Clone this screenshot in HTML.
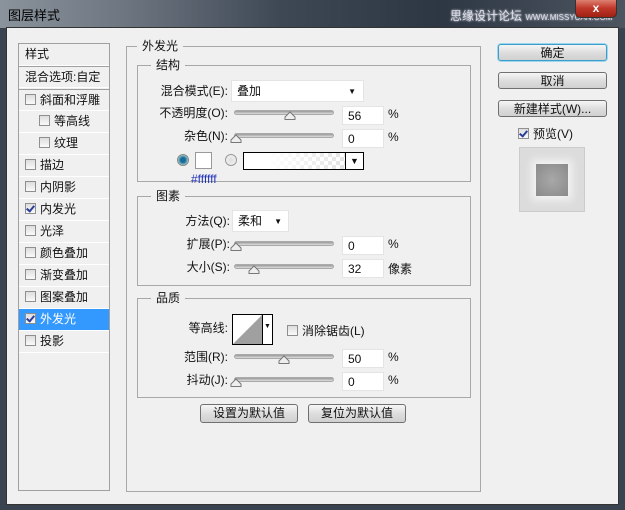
<!DOCTYPE html>
<html><head><meta charset="utf-8"><style>
*{box-sizing:border-box;margin:0;padding:0}
body{width:625px;height:510px;overflow:hidden;background:#3a4350;font-family:"Liberation Sans","Noto Sans CJK SC",sans-serif;font-size:12px;color:#111;position:relative}
.a{position:absolute}
.title{left:0;top:0;width:625px;height:28px;background:linear-gradient(90deg,#8a939c 0%,#6d7680 20%,#3e4855 45%,#2d3743 70%,#4c5560 100%)}
.body{left:6px;top:27px;width:613px;height:478px;background:#f0f0f0;border:1px solid #333}
.list{left:18px;top:43px;width:92px;height:448px;border:1px solid #a0a0a0;background:#f0f0f0}
.row{position:absolute;left:0;width:90px;height:22px;border-bottom:1px solid #fff;line-height:21px;padding-left:6px}
.cb{display:inline-block;width:11px;height:11px;border:1px solid #8f8f8f;background:linear-gradient(#ddd,#fafafa);vertical-align:-1px;margin-right:4px;position:relative}
.cb.on::after{content:"";position:absolute;left:2px;top:0px;width:3px;height:6px;border:solid #2a3e9a;border-width:0 2px 2px 0;transform:rotate(40deg)}
.grp{border:1px solid #a8a8a8}
.leg{position:absolute;background:#f0f0f0;padding:0 5px;top:-9px;line-height:16px}
.lbl{position:absolute;text-align:right;line-height:16px}
.in{position:absolute;background:#fff;border:1px solid #e4e4e4;height:19px;line-height:18px;padding-left:5px}
.trk{position:absolute;height:5px;border-radius:3px;background:linear-gradient(#999,#ddd);border:1px solid #aaa}
.btn{position:absolute;border:1px solid #707070;border-radius:3px;background:linear-gradient(#f6f6f6,#dedede 50%,#d0d0d0);text-align:center;line-height:16px}
</style></head><body>
<div class="a title"></div>
<div class="a" style="left:8px;top:5px;color:#000;font-size:13px">图层样式</div>
<div class="a" style="left:450px;top:7px;color:#dde;font-size:12px;text-shadow:0 0 2px #fff">思缘设计论坛 <span style="font-size:8px">WWW.MISSYUAN.COM</span></div>
<div class="a" style="left:575px;top:-2px;width:42px;height:20px;border-radius:0 0 5px 5px;background:linear-gradient(#e08a7a,#c0392b 50%,#a02010);border:1px solid #333;color:#fff;text-align:center;font-weight:bold;line-height:18px">x</div>
<div class="a body"></div>

<div class="a list">
 <div class="row" style="top:0">样式</div>
 <div class="row" style="top:22px;border-top:1px solid #a0a0a0">混合选项:自定</div>
 <div class="row" style="top:45px;border-top:1px solid #a0a0a0"><span class="cb"></span>斜面和浮雕</div>
 <div class="row" style="top:67px;padding-left:20px"><span class="cb"></span>等高线</div>
 <div class="row" style="top:89px;padding-left:20px"><span class="cb"></span>纹理</div>
 <div class="row" style="top:111px"><span class="cb"></span>描边</div>
 <div class="row" style="top:133px"><span class="cb"></span>内阴影</div>
 <div class="row" style="top:155px"><span class="cb on"></span>内发光</div>
 <div class="row" style="top:177px"><span class="cb"></span>光泽</div>
 <div class="row" style="top:199px"><span class="cb"></span>颜色叠加</div>
 <div class="row" style="top:221px"><span class="cb"></span>渐变叠加</div>
 <div class="row" style="top:243px"><span class="cb"></span>图案叠加</div>
 <div class="row" style="top:265px;background:#3399ff;color:#fff"><span class="cb on"></span>外发光</div>
 <div class="row" style="top:287px"><span class="cb"></span>投影</div>
</div>

<div class="a grp" style="left:126px;top:46px;width:355px;height:446px"><div class="leg" style="left:10px">外发光</div></div>
<div class="a grp" style="left:137px;top:65px;width:334px;height:117px"><div class="leg" style="left:13px">结构</div></div>
<div class="a grp" style="left:137px;top:196px;width:334px;height:90px"><div class="leg" style="left:13px">图素</div></div>
<div class="a grp" style="left:137px;top:298px;width:334px;height:100px"><div class="leg" style="left:13px">品质</div></div>

<div class="lbl" style="left:150px;width:78px;top:83px">混合模式(E):</div>
<div class="in" style="left:231px;top:80px;width:133px;height:22px;line-height:21px">叠加<span style="position:absolute;right:7px;top:0;font-size:8px">▼</span></div>
<div class="lbl" style="left:140px;width:88px;top:105px">不透明度(O):</div>
<div class="trk" style="left:234px;top:110px;width:100px"></div>
<div class="in" style="left:342px;top:106px;width:42px">56</div><div class="a" style="left:388px;top:107px">%</div>
<div class="lbl" style="left:140px;width:88px;top:128px">杂色(N):</div>
<div class="trk" style="left:234px;top:133px;width:100px"></div>
<div class="in" style="left:342px;top:129px;width:42px">0</div><div class="a" style="left:388px;top:130px">%</div>
<div class="a" style="left:177px;top:154px;width:12px;height:12px;border-radius:50%;border:1px solid #888;background:radial-gradient(#1a6a9a 35%,#9cc 70%,#eee)"></div>
<div class="a" style="left:195px;top:152px;width:17px;height:17px;border:1px solid #999;background:#fff"></div>
<div class="a" style="left:225px;top:154px;width:12px;height:12px;border-radius:50%;border:1px solid #999;background:radial-gradient(#ddd,#f8f8f8)"></div>
<div class="a" style="left:243px;top:152px;width:121px;height:18px;border:1px solid #000;background:linear-gradient(90deg,#fff 20%,rgba(255,255,255,0)),repeating-conic-gradient(#ddd 0 25%,#fff 0 50%) 0 0/8px 8px"><div style="position:absolute;right:0;top:0;width:18px;height:16px;background:#fff;border-left:1px solid #000;font-size:9px;text-align:center;line-height:16px">▼</div></div>
<div class="a" style="left:191px;top:172px;color:#2233bb;font-size:12px">#ffffff</div>

<div class="lbl" style="left:150px;width:80px;top:213px">方法(Q):</div>
<div class="in" style="left:232px;top:210px;width:57px;height:22px;line-height:21px">柔和<span style="position:absolute;right:6px;top:0;font-size:8px">▼</span></div>
<div class="lbl" style="left:150px;width:80px;top:236px">扩展(P):</div>
<div class="trk" style="left:234px;top:241px;width:100px"></div>
<div class="in" style="left:342px;top:236px;width:42px">0</div><div class="a" style="left:388px;top:237px">%</div>
<div class="lbl" style="left:150px;width:80px;top:259px">大小(S):</div>
<div class="trk" style="left:234px;top:264px;width:100px"></div>
<div class="in" style="left:342px;top:259px;width:42px">32</div><div class="a" style="left:388px;top:260px">像素</div>

<div class="lbl" style="left:150px;width:78px;top:320px">等高线:</div>
<div class="a" style="left:232px;top:314px;width:41px;height:31px;border:1px solid #000;background:#fff"><svg width="30" height="29" style="position:absolute;left:0;top:0"><polygon points="0,29 29,0 29,29" fill="#a0a0a0"/></svg><div style="position:absolute;left:29px;top:0;width:1px;height:29px;background:#000"></div><div style="position:absolute;left:31px;top:8px;font-size:7px">▼</div></div>
<div class="a" style="left:287px;top:322px"><span class="cb"></span>消除锯齿(L)</div>
<div class="lbl" style="left:150px;width:78px;top:349px">范围(R):</div>
<div class="trk" style="left:234px;top:354px;width:100px"></div>
<div class="in" style="left:342px;top:349px;width:42px">50</div><div class="a" style="left:388px;top:350px">%</div>
<div class="lbl" style="left:150px;width:78px;top:372px">抖动(J):</div>
<div class="trk" style="left:234px;top:377px;width:100px"></div>
<div class="in" style="left:342px;top:372px;width:42px">0</div><div class="a" style="left:388px;top:373px">%</div>

<svg class="a" style="left:0;top:0" width="625" height="510">
<g fill="#eee" stroke="#777">
<path d="M285 117 l5 -5 l5 5 v2.5 h-10z"/>
<path d="M231 140 l5 -5 l5 5 v2.5 h-10z"/>
<path d="M231 248 l5 -5 l5 5 v2.5 h-10z"/>
<path d="M249 271 l5 -5 l5 5 v2.5 h-10z"/>
<path d="M279 361 l5 -5 l5 5 v2.5 h-10z"/>
<path d="M231 384 l5 -5 l5 5 v2.5 h-10z"/>
</g></svg>

<div class="btn" style="left:200px;top:404px;width:98px;height:19px;line-height:17px">设置为默认值</div>
<div class="btn" style="left:308px;top:404px;width:98px;height:19px;line-height:17px">复位为默认值</div>

<div class="btn" style="left:498px;top:44px;width:109px;height:17px;border-color:#3c9ec8;box-shadow:0 0 0 1px #9fd6ef">确定</div>
<div class="btn" style="left:498px;top:72px;width:109px;height:17px">取消</div>
<div class="btn" style="left:498px;top:100px;width:109px;height:17px">新建样式(W)...</div>
<div class="a" style="left:518px;top:125px"><span class="cb on"></span>预览(V)</div>
<div class="a" style="left:519px;top:147px;width:66px;height:65px;border:1px solid #ccc;background:#dcdcdc"><div style="position:absolute;left:16px;top:16px;width:32px;height:32px;background:radial-gradient(#a8a8a8,#8a8a8a);box-shadow:0 0 8px 4px #f4f4f4"></div></div>
</body></html>
